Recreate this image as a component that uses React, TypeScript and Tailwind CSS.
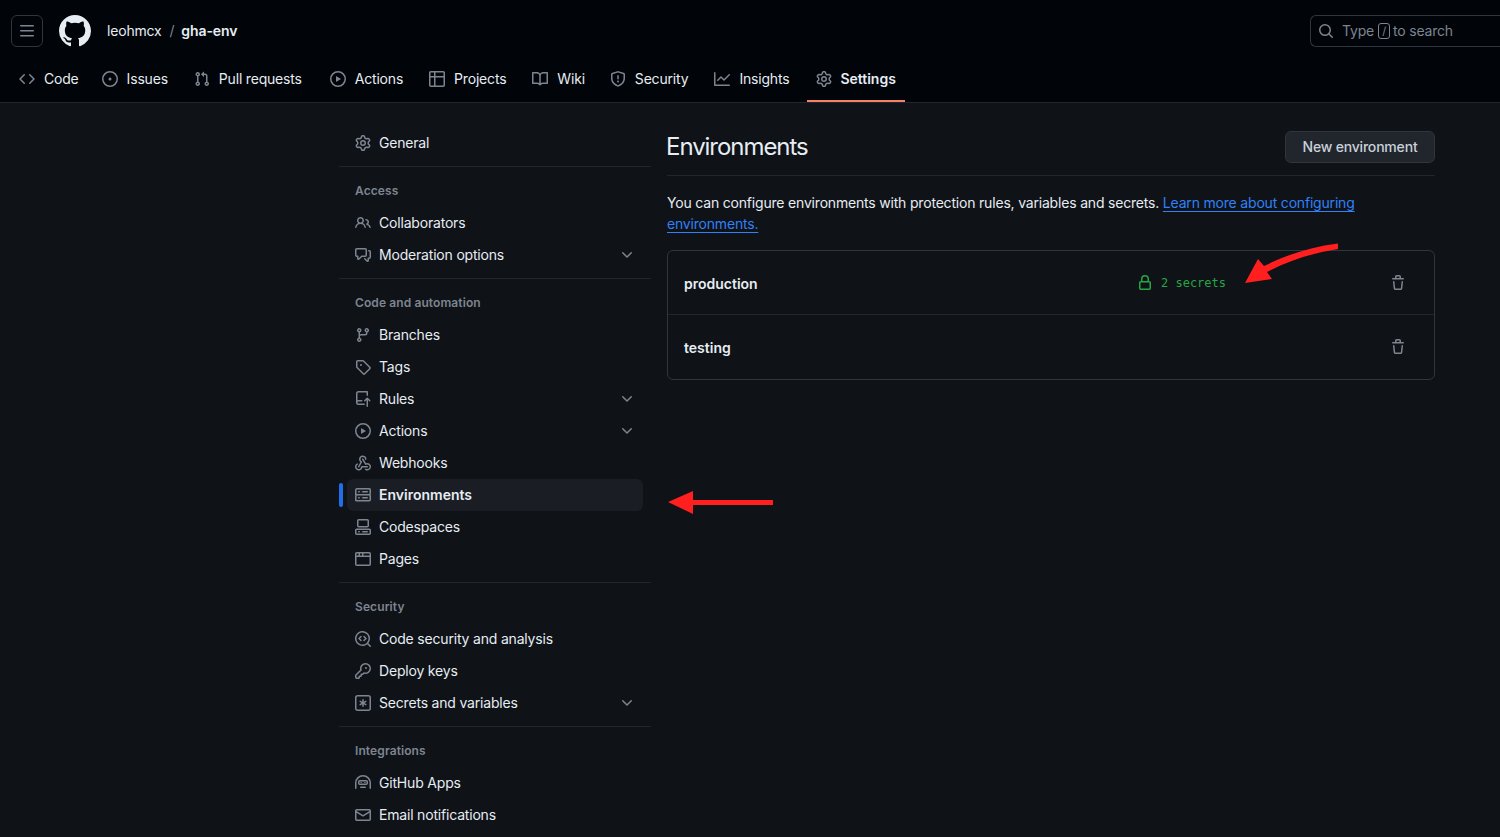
import type { ComponentType } from "react"

type IconProps = { size?: number; className?: string }
type Icon = ComponentType<IconProps>

// the react-icons Go set ships the 24px cuts, the page uses the 16px octicons, so they are inlined here
const oct = (...paths: string[]): Icon => ({ size = 16, className }: IconProps) => (
  <svg width={size} height={size} viewBox="0 0 16 16" fill="currentColor" className={className}>
    {paths.map((d, i) => (
      <path key={i} d={d} />
    ))}
  </svg>
)

const ThreeBars = oct("M1 2.75A.75.75 0 0 1 1.75 2h12.5a.75.75 0 0 1 0 1.5H1.75A.75.75 0 0 1 1 2.75Zm0 5A.75.75 0 0 1 1.75 7h12.5a.75.75 0 0 1 0 1.5H1.75A.75.75 0 0 1 1 7.75ZM1.75 12h12.5a.75.75 0 0 1 0 1.5H1.75a.75.75 0 0 1 0-1.5Z")
const MarkGithub = oct("M8 0c4.42 0 8 3.58 8 8a8.013 8.013 0 0 1-5.45 7.59c-.4.08-.55-.17-.55-.38 0-.27.01-1.13.01-2.2 0-.75-.25-1.23-.54-1.48 1.78-.2 3.65-.88 3.65-3.95 0-.88-.31-1.59-.82-2.15.08-.2.36-1.02-.08-2.12 0 0-.67-.22-2.2.82-.64-.18-1.32-.27-2-.27-.68 0-1.36.09-2 .27-1.53-1.03-2.2-.82-2.2-.82-.44 1.1-.16 1.92-.08 2.12-.51.56-.82 1.28-.82 2.15 0 3.06 1.86 3.75 3.64 3.95-.23.2-.44.55-.51 1.07-.46.21-1.61.55-2.33-.66-.15-.24-.6-.83-1.23-.82-.67.01-.27.38.01.53.34.19.73.9.82 1.13.16.45.68 1.31 2.69.94 0 .67.01 1.3.01 1.49 0 .21-.15.45-.55.38A7.995 7.995 0 0 1 0 8c0-4.42 3.58-8 8-8Z")
const Search = oct("M10.68 11.74a6 6 0 0 1-7.922-8.982 6 6 0 0 1 8.982 7.922l3.04 3.04a.749.749 0 0 1-.326 1.275.749.749 0 0 1-.734-.215ZM11.5 7a4.499 4.499 0 1 0-8.997 0A4.499 4.499 0 0 0 11.5 7Z")
const Code = oct("m11.28 3.22 4.25 4.25a.75.75 0 0 1 0 1.06l-4.25 4.25a.749.749 0 0 1-1.275-.326.749.749 0 0 1 .215-.734L13.94 8l-3.72-3.72a.749.749 0 0 1 .326-1.275.749.749 0 0 1 .734.215Zm-6.56 0a.751.751 0 0 1 1.042.018.751.751 0 0 1 .018 1.042L2.06 8l3.72 3.72a.749.749 0 0 1-.326 1.275.749.749 0 0 1-.734-.215L.47 8.53a.75.75 0 0 1 0-1.06Z")
const IssueOpened = oct("M8 9.5a1.5 1.5 0 1 0 0-3 1.5 1.5 0 0 0 0 3Z", "M8 0a8 8 0 1 1 0 16A8 8 0 0 1 8 0ZM1.5 8a6.5 6.5 0 1 0 13 0 6.5 6.5 0 0 0-13 0Z")
const PullRequest = oct("M1.5 3.25a2.25 2.25 0 1 1 3 2.122v5.256a2.251 2.251 0 1 1-1.5 0V5.372A2.25 2.25 0 0 1 1.5 3.25Zm5.677-.177L9.573.677A.25.25 0 0 1 10 .854V2.5h1A2.5 2.5 0 0 1 13.5 5v5.628a2.251 2.251 0 1 1-1.5 0V5a1 1 0 0 0-1-1h-1v1.646a.25.25 0 0 1-.427.177L7.177 3.427a.25.25 0 0 1 0-.354ZM3.75 2.5a.75.75 0 1 0 0 1.5.75.75 0 0 0 0-1.5Zm0 9.5a.75.75 0 1 0 0 1.5.75.75 0 0 0 0-1.5Zm8.25.75a.75.75 0 1 0 1.5 0 .75.75 0 0 0-1.5 0Z")
const Play = oct("M8 0a8 8 0 1 1 0 16A8 8 0 0 1 8 0ZM1.5 8a6.5 6.5 0 1 0 13 0 6.5 6.5 0 0 0-13 0Zm4.879-2.773 4.264 2.559a.25.25 0 0 1 0 .428l-4.264 2.559A.25.25 0 0 1 6 10.559V5.442a.25.25 0 0 1 .379-.215Z")
const Table = oct("M0 1.75C0 .784.784 0 1.75 0h12.5C15.216 0 16 .784 16 1.75v12.5A1.75 1.75 0 0 1 14.25 16H1.75A1.75 1.75 0 0 1 0 14.25ZM6.5 6.5v8h7.75a.25.25 0 0 0 .25-.25V6.5Zm8-1.5V1.75a.25.25 0 0 0-.25-.25H6.5V5Zm-13 1.5v7.75c0 .138.112.25.25.25H5v-8ZM5 5V1.5H1.75a.25.25 0 0 0-.25.25V5Z")
const Book = oct("M0 1.75A.75.75 0 0 1 .75 1h4.253c1.227 0 2.317.59 3 1.501A3.743 3.743 0 0 1 11.006 1h4.245a.75.75 0 0 1 .75.75v10.5a.75.75 0 0 1-.75.75h-4.507a2.25 2.25 0 0 0-1.591.659l-.622.621a.75.75 0 0 1-1.06 0l-.622-.621A2.25 2.25 0 0 0 5.258 13H.75a.75.75 0 0 1-.75-.75Zm7.251 10.324.004-5.073-.002-2.253A2.25 2.25 0 0 0 5.003 2.5H1.5v9h3.757a3.75 3.75 0 0 1 1.994.574ZM8.755 4.75l-.004 7.322a3.752 3.752 0 0 1 1.992-.572H14.5v-9h-3.495a2.25 2.25 0 0 0-2.25 2.25Z")
const Shield = oct("M7.467.133a1.748 1.748 0 0 1 1.066 0l5.25 1.68A1.75 1.75 0 0 1 15 3.48V7c0 1.566-.32 3.182-1.303 4.682-.983 1.498-2.585 2.813-5.032 3.855a1.697 1.697 0 0 1-1.33 0c-2.447-1.042-4.049-2.357-5.032-3.855C1.32 10.182 1 8.566 1 7V3.48a1.75 1.75 0 0 1 1.217-1.667Zm.61 1.429a.25.25 0 0 0-.153 0l-5.25 1.68a.25.25 0 0 0-.174.238V7c0 1.358.275 2.666 1.057 3.86.784 1.194 2.121 2.34 4.366 3.297a.196.196 0 0 0 .154 0c2.245-.956 3.582-2.104 4.366-3.298C13.225 9.666 13.5 8.36 13.5 7V3.48a.251.251 0 0 0-.174-.237l-5.25-1.68ZM8.75 4.75v3a.75.75 0 0 1-1.5 0v-3a.75.75 0 0 1 1.5 0ZM9 10.5a1 1 0 1 1-2 0 1 1 0 0 1 2 0Z")
const Graph = oct("M1.5 1.75V13.5h13.75a.75.75 0 0 1 0 1.5H.75a.75.75 0 0 1-.75-.75V1.75a.75.75 0 0 1 1.5 0Zm14.28 2.53-5.25 5.25a.75.75 0 0 1-1.06 0L7 7.06 4.28 9.78a.751.751 0 0 1-1.042-.018.751.751 0 0 1-.018-1.042l3.25-3.25a.75.75 0 0 1 1.06 0L10 7.94l4.72-4.72a.751.751 0 0 1 1.042.018.751.751 0 0 1 .018 1.042Z")
const Gear = oct("M8 0a8.2 8.2 0 0 1 .701.031C9.444.095 9.99.645 10.16 1.29l.288 1.107c.018.066.079.158.212.224.231.114.454.243.668.386.123.082.233.09.299.071l1.103-.303c.644-.176 1.392.021 1.82.63.27.385.506.792.704 1.218.315.675.111 1.422-.364 1.891l-.814.806c-.049.048-.098.147-.088.294.016.257.016.515 0 .772-.01.147.038.246.088.294l.814.806c.475.469.679 1.216.364 1.891a7.977 7.977 0 0 1-.704 1.217c-.428.61-1.176.807-1.82.63l-1.102-.302c-.067-.019-.177-.011-.3.071a5.909 5.909 0 0 1-.668.386c-.133.066-.194.158-.211.224l-.29 1.106c-.168.646-.715 1.196-1.458 1.26a8.006 8.006 0 0 1-1.402 0c-.743-.064-1.289-.614-1.458-1.26l-.289-1.106c-.018-.066-.079-.158-.212-.224a5.738 5.738 0 0 1-.668-.386c-.123-.082-.233-.09-.299-.071l-1.103.303c-.644.176-1.392-.021-1.82-.63a8.12 8.12 0 0 1-.704-1.218c-.315-.675-.111-1.422.363-1.891l.815-.806c.05-.048.098-.147.088-.294a6.214 6.214 0 0 1 0-.772c.01-.147-.038-.246-.088-.294l-.815-.806C.635 6.045.431 5.298.746 4.623a7.92 7.92 0 0 1 .704-1.217c.428-.61 1.176-.807 1.82-.63l1.102.302c.067.019.177.011.3-.071.214-.143.437-.272.668-.386.133-.066.194-.158.211-.224l.29-1.106C6.009.645 6.556.095 7.299.03 7.53.01 7.764 0 8 0Zm-.571 1.525c-.036.003-.108.036-.137.146l-.289 1.105c-.147.561-.549.967-.998 1.189-.173.086-.34.183-.5.29-.417.278-.97.423-1.529.27l-1.103-.303c-.109-.03-.175.016-.195.045-.22.312-.412.644-.573.99-.014.031-.021.11.059.19l.815.806c.411.406.562.957.53 1.456a4.709 4.709 0 0 0 0 .582c.032.499-.119 1.05-.53 1.456l-.815.806c-.081.08-.073.159-.059.19.162.346.353.677.573.989.02.03.085.076.195.046l1.102-.303c.56-.153 1.113-.008 1.53.27.161.107.328.204.501.29.447.222.85.629.997 1.189l.289 1.105c.029.109.101.143.137.146a6.6 6.6 0 0 0 1.142 0c.036-.003.108-.036.137-.146l.289-1.105c.147-.561.549-.967.998-1.189.173-.086.34-.183.5-.29.417-.278.97-.423 1.529-.27l1.103.303c.109.029.175-.016.195-.045.22-.313.411-.644.573-.99.014-.031.021-.11-.059-.19l-.815-.806c-.411-.406-.562-.957-.53-1.456a4.709 4.709 0 0 0 0-.582c-.032-.499.119-1.05.53-1.456l.815-.806c.081-.08.073-.159.059-.19a6.464 6.464 0 0 0-.573-.989c-.02-.03-.085-.076-.195-.046l-1.102.303c-.56.153-1.113.008-1.53-.27a4.44 4.44 0 0 0-.501-.29c-.447-.222-.85-.629-.997-1.189l-.289-1.105c-.029-.11-.101-.143-.137-.146a6.6 6.6 0 0 0-1.142 0ZM11 8a3 3 0 1 1-6 0 3 3 0 0 1 6 0ZM9.5 8a1.5 1.5 0 1 0-3.001.001A1.5 1.5 0 0 0 9.5 8Z")
const People = oct("M2 5.5a3.5 3.5 0 1 1 5.898 2.549 5.508 5.508 0 0 1 3.034 4.084.75.75 0 1 1-1.482.235 4 4 0 0 0-7.9 0 .75.75 0 0 1-1.482-.236A5.507 5.507 0 0 1 3.102 8.05 3.493 3.493 0 0 1 2 5.5ZM11 4a3.001 3.001 0 0 1 2.22 5.018 5.01 5.01 0 0 1 2.56 3.012.749.749 0 0 1-.885.954.752.752 0 0 1-.549-.514 3.507 3.507 0 0 0-2.522-2.372.75.75 0 0 1-.574-.73v-.352a.75.75 0 0 1 .416-.672A1.5 1.5 0 0 0 11 5.5.75.75 0 0 1 11 4Zm-5.5-.5a2 2 0 1 0-.001 3.999A2 2 0 0 0 5.5 3.5Z")
const Discussion = oct("M1.75 1h8.5c.966 0 1.75.784 1.75 1.75v5.5A1.75 1.75 0 0 1 10.25 10H7.061l-2.574 2.573A1.458 1.458 0 0 1 2 11.543V10h-.25A1.75 1.75 0 0 1 0 8.25v-5.5C0 1.784.784 1 1.75 1ZM1.5 2.75v5.5c0 .138.112.25.25.25h1a.75.75 0 0 1 .75.75v2.19l2.72-2.72a.749.749 0 0 1 .53-.22h3.5a.25.25 0 0 0 .25-.25v-5.5a.25.25 0 0 0-.25-.25h-8.5a.25.25 0 0 0-.25.25Zm13 2a.25.25 0 0 0-.25-.25h-.5a.75.75 0 0 1 0-1.5h.5c.966 0 1.75.784 1.75 1.75v5.5A1.75 1.75 0 0 1 14.25 12H14v1.543a1.458 1.458 0 0 1-2.487 1.03L9.22 12.28a.749.749 0 0 1 .326-1.275.749.749 0 0 1 .734.215l2.22 2.22v-2.19a.75.75 0 0 1 .75-.75h1a.25.25 0 0 0 .25-.25Z")
const Branch = oct("M9.5 3.25a2.25 2.25 0 1 1 3 2.122V6A2.5 2.5 0 0 1 10 8.5H6a1 1 0 0 0-1 1v1.128a2.251 2.251 0 1 1-1.5 0V5.372a2.25 2.25 0 1 1 1.5 0v1.836A2.493 2.493 0 0 1 6 7h4a1 1 0 0 0 1-1v-.628A2.25 2.25 0 0 1 9.5 3.25Zm-6 0a.75.75 0 1 0 1.5 0 .75.75 0 0 0-1.5 0Zm8.25-.75a.75.75 0 1 0 0 1.5.75.75 0 0 0 0-1.5ZM4.25 12a.75.75 0 1 0 0 1.5.75.75 0 0 0 0-1.5Z")
const Tag = oct("M1 7.775V2.75C1 1.784 1.784 1 2.75 1h5.025c.464 0 .91.184 1.238.513l6.25 6.25a1.75 1.75 0 0 1 0 2.474l-5.026 5.026a1.75 1.75 0 0 1-2.474 0l-6.25-6.25A1.752 1.752 0 0 1 1 7.775Zm1.5 0c0 .066.026.13.073.177l6.25 6.25a.25.25 0 0 0 .354 0l5.025-5.025a.25.25 0 0 0 0-.354l-6.25-6.25a.25.25 0 0 0-.177-.073H2.75a.25.25 0 0 0-.25.25ZM6 5a1 1 0 1 1 0 2 1 1 0 0 1 0-2Z")
const RepoPush = oct("M1 2.5A2.5 2.5 0 0 1 3.5 0h8.75a.75.75 0 0 1 .75.75v3.5a.75.75 0 0 1-1.5 0V1.5h-8a1 1 0 0 0-1 1v6.708A2.493 2.493 0 0 1 3.5 9h3.25a.75.75 0 0 1 0 1.5H3.5a1 1 0 0 0 0 2h5.75a.75.75 0 0 1 0 1.5H3.5A2.5 2.5 0 0 1 1 11.5Zm13.23 7.79h-.001l-1.224-1.224v6.184a.75.75 0 0 1-1.5 0V9.066L10.28 10.29a.75.75 0 0 1-1.06-1.061l2.505-2.504a.75.75 0 0 1 1.06 0L15.29 9.23a.751.751 0 0 1-.018 1.042.751.751 0 0 1-1.042.018Z")
const Webhook = oct(
  "M5.5 4.25a2.25 2.25 0 0 1 4.5 0 .75.75 0 0 0 1.5 0 3.75 3.75 0 1 0-6.14 2.889l-2.272 4.258a.75.75 0 0 0 1.324.706L7 7.25a.75.75 0 0 0-.309-1.015A2.25 2.25 0 0 1 5.5 4.25Z",
  "M7.364 3.607a.75.75 0 0 1 1.03.257l2.608 4.349a3.75 3.75 0 1 1-.628 6.785.75.75 0 0 1 .752-1.299 2.25 2.25 0 1 0-.033-3.88.75.75 0 0 1-1.03-.256L7.107 4.636a.75.75 0 0 1 .257-1.029Z",
  "M2.9 8.776A.75.75 0 0 1 2.625 9.8 2.25 2.25 0 1 0 6 11.75a.75.75 0 0 1 .75-.751h5.5a.75.75 0 0 1 0 1.5H7.425a3.751 3.751 0 1 1-5.55-3.998.75.75 0 0 1 1.024.274Z",
)
const Server = oct("M1.75 1h12.5c.966 0 1.75.784 1.75 1.75v4c0 .372-.116.717-.314 1 .198.283.314.628.314 1v4a1.75 1.75 0 0 1-1.75 1.75H1.75A1.75 1.75 0 0 1 0 13.75v-4c0-.372.116-.717.314-1a1.739 1.739 0 0 1-.314-1v-4C0 1.784.784 1 1.75 1ZM1.5 2.75v4c0 .138.112.25.25.25h12.5a.25.25 0 0 0 .25-.25v-4a.25.25 0 0 0-.25-.25H1.75a.25.25 0 0 0-.25.25Zm.25 5.75a.25.25 0 0 0-.25.25v4c0 .138.112.25.25.25h12.5a.25.25 0 0 0 .25-.25v-4a.25.25 0 0 0-.25-.25ZM7 4.75A.75.75 0 0 1 7.75 4h4.5a.75.75 0 0 1 0 1.5h-4.5A.75.75 0 0 1 7 4.75ZM7.75 10h4.5a.75.75 0 0 1 0 1.5h-4.5a.75.75 0 0 1 0-1.5ZM3 4.75A.75.75 0 0 1 3.75 4h.5a.75.75 0 0 1 0 1.5h-.5A.75.75 0 0 1 3 4.75ZM3.75 10h.5a.75.75 0 0 1 0 1.5h-.5a.75.75 0 0 1 0-1.5Z")
const Codespaces = oct(
  "M0 11.25c0-.966.784-1.75 1.75-1.75h12.5c.966 0 1.75.784 1.75 1.75v3A1.75 1.75 0 0 1 14.25 16H1.75A1.75 1.75 0 0 1 0 14.25Zm2-9.5C2 .784 2.784 0 3.75 0h8.5C13.216 0 14 .784 14 1.75v5a1.75 1.75 0 0 1-1.75 1.75h-8.5A1.75 1.75 0 0 1 2 6.75Zm1.75-.25a.25.25 0 0 0-.25.25v5c0 .138.112.25.25.25h8.5a.25.25 0 0 0 .25-.25v-5a.25.25 0 0 0-.25-.25Zm-2 9.5a.25.25 0 0 0-.25.25v3c0 .138.112.25.25.25h12.5a.25.25 0 0 0 .25-.25v-3a.25.25 0 0 0-.25-.25Z",
  "M7 12.75a.75.75 0 0 1 .75-.75h4.5a.75.75 0 0 1 0 1.5h-4.5a.75.75 0 0 1-.75-.75Zm-4 0a.75.75 0 0 1 .75-.75h.5a.75.75 0 0 1 0 1.5h-.5a.75.75 0 0 1-.75-.75Z",
)
const BrowserIcon = oct("M0 2.75C0 1.784.784 1 1.75 1h12.5c.966 0 1.75.784 1.75 1.75v10.5A1.75 1.75 0 0 1 14.25 15H1.75A1.75 1.75 0 0 1 0 13.25ZM14.5 6h-13v7.25c0 .138.112.25.25.25h12.5a.25.25 0 0 0 .25-.25Zm-6-3.5v2H14.5V2.75a.25.25 0 0 0-.25-.25ZM5 2.5v2h2v-2Zm-3.25 0a.25.25 0 0 0-.25.25V4.5h2v-2Z")
const Codescan = oct(
  "M8.47 4.97a.75.75 0 0 0 0 1.06L9.94 7.5 8.47 8.97a.75.75 0 1 0 1.06 1.06l2-2a.75.75 0 0 0 0-1.06l-2-2a.75.75 0 0 0-1.06 0ZM6.53 6.03a.75.75 0 0 0-1.06-1.06l-2 2a.75.75 0 0 0 0 1.06l2 2a.75.75 0 1 0 1.06-1.06L5.06 7.5l1.47-1.47Z",
  "M12.246 13.307a7.501 7.501 0 1 1 1.06-1.06l2.474 2.473a.749.749 0 0 1-.326 1.275.749.749 0 0 1-.734-.215ZM1.5 7.5a6.002 6.002 0 0 0 3.608 5.504 6.002 6.002 0 0 0 6.486-1.117.748.748 0 0 1 .292-.293A6 6 0 1 0 1.5 7.5Z",
)
const Key = oct("M10.5 0a5.499 5.499 0 1 1-1.288 10.848l-.932.932a.749.749 0 0 1-.53.22H7v.75a.749.749 0 0 1-.22.53l-.5.5a.749.749 0 0 1-.53.22H5v.75a.749.749 0 0 1-.22.53l-.5.5a.749.749 0 0 1-.53.22h-2A1.75 1.75 0 0 1 0 14.25v-2c0-.199.079-.389.22-.53l4.932-4.932A5.5 5.5 0 0 1 10.5 0Zm-4 5.5c-.001.431.069.86.205 1.269a.75.75 0 0 1-.181.768L1.5 12.56v1.69c0 .138.112.25.25.25h1.69l.06-.06v-1.19a.75.75 0 0 1 .75-.75h1.19l.06-.06v-1.19a.75.75 0 0 1 .75-.75h1.19l1.023-1.025a.75.75 0 0 1 .768-.18A4 4 0 1 0 6.5 5.5ZM11 6a1 1 0 1 1 0-2 1 1 0 0 1 0 2Z")
const KeyAsterisk = oct(
  "M0 2.75A2.75 2.75 0 0 1 2.75 0h10.5A2.75 2.75 0 0 1 16 2.75v10.5A2.75 2.75 0 0 1 13.25 16H2.75A2.75 2.75 0 0 1 0 13.25ZM2.75 1.5c-.69 0-1.25.56-1.25 1.25v10.5c0 .69.56 1.25 1.25 1.25h10.5c.69 0 1.25-.56 1.25-1.25V2.75c0-.69-.56-1.25-1.25-1.25Z",
  "M8 4a.75.75 0 0 1 .75.75V6.7l1.69-.975a.75.75 0 0 1 .75 1.3L9.5 8l1.69.975a.75.75 0 0 1-.75 1.3L8.75 9.3v1.95a.75.75 0 0 1-1.5 0V9.3l-1.69.975a.75.75 0 0 1-.75-1.3L6.5 8l-1.69-.975a.75.75 0 0 1 .75-1.3L7.25 6.7V4.75A.75.75 0 0 1 8 4Z",
)
const Hubot = ({ size = 16, className }: IconProps) => (
  <svg width={size} height={size} viewBox="0 0 16 16" fill="currentColor" className={className}>
    <path d="M0 8a8 8 0 0 1 16 0v5.25a.75.75 0 0 1-1.5 0V8a6.5 6.5 0 1 0-13 0v5.25a.75.75 0 0 1-1.5 0Z" />
    <path fillRule="evenodd" d="M3 6.75C3 5.784 3.784 5 4.75 5h6.5c.966 0 1.75.784 1.75 1.75v1.5A1.75 1.75 0 0 1 11.25 10h-6.5A1.75 1.75 0 0 1 3 8.25ZM4.75 6.5a.25.25 0 0 0-.25.25v1.5c0 .138.112.25.25.25h6.5a.25.25 0 0 0 .25-.25v-1.5a.25.25 0 0 0-.25-.25Z" />
    <path d="M5.5 7h1.25v1H5.5ZM9.25 7h1.25v1H9.25ZM5.75 11.5h4.5a.75.75 0 0 1 0 1.5h-4.5a.75.75 0 0 1 0-1.5Z" />
  </svg>
)
const Mail = oct("M1.75 2h12.5c.966 0 1.75.784 1.75 1.75v8.5A1.75 1.75 0 0 1 14.25 14H1.75A1.75 1.75 0 0 1 0 12.25v-8.5C0 2.784.784 2 1.75 2ZM1.5 12.251c0 .138.112.25.25.25h12.5a.25.25 0 0 0 .25-.25V5.809L8.38 9.397a.75.75 0 0 1-.76 0L1.5 5.809v6.442Zm13-8.181v-.32a.25.25 0 0 0-.25-.25H1.75a.25.25 0 0 0-.25.25v.32L8 7.88Z")
const ChevronDown = oct("M12.78 5.22a.749.749 0 0 1 0 1.06l-4.25 4.25a.749.749 0 0 1-1.06 0L3.22 6.28a.749.749 0 1 1 1.06-1.06L8 8.939l3.72-3.719a.749.749 0 0 1 1.06 0Z")
const Lock = oct("M4 4a4 4 0 0 1 8 0v2h.25c.966 0 1.75.784 1.75 1.75v5.5A1.75 1.75 0 0 1 12.25 15h-8.5A1.75 1.75 0 0 1 2 13.25v-5.5C2 6.784 2.784 6 3.75 6H4Zm8.25 3.5h-8.5a.25.25 0 0 0-.25.25v5.5c0 .138.112.25.25.25h8.5a.25.25 0 0 0 .25-.25v-5.5a.25.25 0 0 0-.25-.25ZM10.5 6V4a2.5 2.5 0 1 0-5 0v2Z")
const Trash = oct("M11 1.75V3h2.25a.75.75 0 0 1 0 1.5H2.75a.75.75 0 0 1 0-1.5H5V1.75C5 .784 5.784 0 6.75 0h2.5C10.216 0 11 .784 11 1.75ZM4.496 6.675l.66 6.6a.25.25 0 0 0 .249.225h5.19a.25.25 0 0 0 .249-.225l.66-6.6a.75.75 0 0 1 1.492.149l-.66 6.6A1.748 1.748 0 0 1 10.595 15h-5.19a1.75 1.75 0 0 1-1.741-1.575l-.66-6.6a.75.75 0 1 1 1.492-.15ZM6.5 1.75V3h3V1.75a.25.25 0 0 0-.25-.25h-2.5a.25.25 0 0 0-.25.25Z")

// nudge evens out the small width differences of the installed font
const tabs: { label: string; icon: Icon; active?: boolean; nudge?: string }[] = [
  { label: "Code", icon: Code },
  { label: "Issues", icon: IssueOpened, nudge: "-ml-[3px]" },
  { label: "Pull requests", icon: PullRequest },
  { label: "Actions", icon: Play, nudge: "ml-[2px]" },
  { label: "Projects", icon: Table },
  { label: "Wiki", icon: Book },
  { label: "Security", icon: Shield, nudge: "-ml-px" },
  { label: "Insights", icon: Graph },
  { label: "Settings", icon: Gear, active: true },
]

type Item = { label: string; icon: Icon; more?: boolean; active?: boolean }

const groups: { title?: string; items: Item[] }[] = [
  { items: [{ label: "General", icon: Gear }] },
  {
    title: "Access",
    items: [
      { label: "Collaborators", icon: People },
      { label: "Moderation options", icon: Discussion, more: true },
    ],
  },
  {
    title: "Code and automation",
    items: [
      { label: "Branches", icon: Branch },
      { label: "Tags", icon: Tag },
      { label: "Rules", icon: RepoPush, more: true },
      { label: "Actions", icon: Play, more: true },
      { label: "Webhooks", icon: Webhook },
      { label: "Environments", icon: Server, active: true },
      { label: "Codespaces", icon: Codespaces },
      { label: "Pages", icon: BrowserIcon },
    ],
  },
  {
    title: "Security",
    items: [
      { label: "Code security and analysis", icon: Codescan },
      { label: "Deploy keys", icon: Key },
      { label: "Secrets and variables", icon: KeyAsterisk, more: true },
    ],
  },
  {
    title: "Integrations",
    items: [
      { label: "GitHub Apps", icon: Hubot },
      { label: "Email notifications", icon: Mail },
    ],
  },
]

const Header = () => (
  <header className="bg-[#010409] h-[103px] border-b border-[#21262d] shrink-0 overflow-hidden">
    <div className="h-[62px] flex items-center pl-[11px]">
      <button className="w-8 h-8 rounded-md border border-[#30363d] flex items-center justify-center text-[#7d8590]">
        <ThreeBars size={16} />
      </button>
      <MarkGithub size={32} className="ml-4 text-[#e6edf3]" />
      <span className="ml-4 text-sm text-[#e6edf3]">leohmcx</span>
      <span className="ml-2 text-sm text-[#7d8590]">/</span>
      <span className="ml-[7px] text-sm font-semibold tracking-[-0.1px] text-[#e6edf3]">gha-env</span>
      <div className="ml-auto w-[190px] h-8 shrink-0 rounded-l-md border border-r-0 border-[#30363d] flex items-center pl-[7px] text-sm text-[#7d8590]">
        <Search size={16} />
        <span className="ml-2">Type</span>
        <span className="ml-1 mr-[3px] w-3 h-4 rounded-[3px] border border-[#7d8590] flex items-center justify-center text-[11px] leading-none">/</span>
        <span>to search</span>
      </div>
    </div>
    <nav className="h-10 flex items-stretch pl-[11px] gap-[10px]">
      {tabs.map((t) => (
        <a
          key={t.label}
          className={clsxTab(t.active, t.nudge)}
        >
          <t.icon size={16} className="text-[#7d8590]" />
          {t.label}
        </a>
      ))}
    </nav>
  </header>
)

function clsxTab(active?: boolean, nudge = "") {
  return active
    ? "flex items-center gap-2 px-[9px] pb-1 text-sm font-semibold tracking-normal text-[#e6edf3] border-b-2 border-[#f78166]"
    : `flex items-center gap-[9px] px-2 pb-1 text-sm text-[#e6edf3] border-b-2 border-transparent ${nudge}`
}

const SideRow = ({ item }: { item: Item }) => (
  <div
    className={
      item.active
        ? "relative h-8 mx-2 px-2 flex items-center rounded-md text-sm text-[#e6edf3] bg-[#1a1e24] font-semibold tracking-normal"
        : "relative h-8 mx-2 px-2 flex items-center rounded-md text-sm text-[#e6edf3]"
    }
  >
    {item.active && <span className="absolute -left-2 top-1 w-1 h-6 rounded-md bg-[#1f6feb]" />}
    <item.icon size={16} className="text-[#7d8590] mr-2 shrink-0" />
    {item.label}
    {item.more && <ChevronDown size={16} className="ml-auto text-[#7d8590]" />}
  </div>
)

const Sidebar = () => (
  <aside className="w-[312px] shrink-0 ml-[339px] pt-6">
    {groups.map((g, i) => (
      <div key={i} className={i > 0 ? "border-t border-[#21262d] mt-[7px] pt-[15px]" : ""}>
        {g.title && (
          <h3 className="pl-4 text-xs font-semibold tracking-[0.1px] text-[#7d8590] h-[17px] leading-[17px] mb-2">{g.title}</h3>
        )}
        {g.items.map((it) => (
          <SideRow key={it.label} item={it} />
        ))}
      </div>
    ))}
  </aside>
)

const EnvRow = ({ name, secrets }: { name: string; secrets?: string }) => (
  <div className="h-16 flex items-center pl-4 pr-7 border-b border-[#21262d] last:border-b-0">
    <span className="pt-[2px] text-sm font-semibold tracking-normal text-[#e6edf3]">{name}</span>
    {secrets && (
      <span className="absolute left-[469px] flex items-center gap-2 text-[#27a644]">
        <Lock size={16} />
        <span className="text-xs tracking-normal font-['DejaVu_Sans_Mono',monospace]">{secrets}</span>
      </span>
    )}
    <Trash size={16} className="ml-auto text-[#7d8590]" />
  </div>
)

const Content = () => (
  <main className="w-[768px] shrink-0 ml-[16px] pt-7">
    <div className="h-[45px] flex items-start justify-between border-b border-[#21262d]">
      <h2 className="-ml-px text-2xl leading-8 tracking-[-1.05px] text-[#e6edf3]">Environments</h2>
      <button className="h-8 w-[150px] rounded-md border border-[#30363d] bg-[#21262d] text-sm font-medium text-[#c9d1d9]">
        New environment
      </button>
    </div>
    <p className="mt-4 text-sm leading-[21px] text-[#e6edf3]">
      You can configure environments with protection rules, variables and secrets.{" "}
      <a className="text-[#2f81f7] underline underline-offset-[3px]">Learn more about configuring environments.</a>
    </p>
    <div className="relative mt-4 rounded-md border border-[#30363d]">
      <EnvRow name="production" secrets="2 secrets" />
      <EnvRow name="testing" />
    </div>
  </main>
)

export default function App() {
  return (
    <div className="relative w-[1500px] h-[837px] overflow-hidden flex flex-col bg-[#0f1217] tracking-[-0.19px] font-['Inter',sans-serif]">
      <Header />
      <div className="flex">
        <Sidebar />
        <Content />
      </div>
      {/* red annotations on top of the screenshot */}
      <svg className="absolute left-0 top-0 pointer-events-none" width="1500" height="837" fill="#ff1f1f">
        <path d="M1338 243.500 C1310 247 1286 255 1264 266 L1258 259 L1245 283 L1272 279 L1267 272 C1288 261 1312 253 1338 249 Z" />
        <path d="M668 502 L693 491 L693 500 L773 500 L773 505 L693 505 L693 514 Z" />
      </svg>
    </div>
  )
}
